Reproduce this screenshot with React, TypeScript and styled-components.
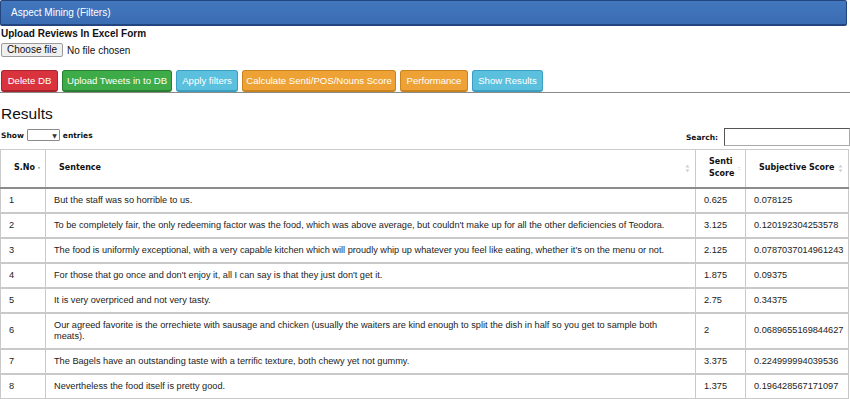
import React from 'react'
import styled, { createGlobalStyle } from 'styled-components'

const GlobalStyle = createGlobalStyle`
    body {
        margin: 0;
        background: #fff;
        font-family: 'Liberation Sans', Arial, sans-serif;
        color: #222;
    }
`

interface Row {
    id: number
    sentence: string
    senti: string
    subjective: string
}

const rows: Row[] = [
    { id: 1, sentence: 'But the staff was so horrible to us.', senti: '0.625', subjective: '0.078125' },
    {
        id: 2,
        sentence:
            "To be completely fair, the only redeeming factor was the food, which was above average, but couldn't make up for all the other deficiencies of Teodora.",
        senti: '3.125',
        subjective: '0.120192304253578',
    },
    {
        id: 3,
        sentence:
            "The food is uniformly exceptional, with a very capable kitchen which will proudly whip up whatever you feel like eating, whether it's on the menu or not.",
        senti: '2.125',
        subjective: '0.0787037014961243',
    },
    {
        id: 4,
        sentence: "For those that go once and don't enjoy it, all I can say is that they just don't get it.",
        senti: '1.875',
        subjective: '0.09375',
    },
    { id: 5, sentence: 'It is very overpriced and not very tasty.', senti: '2.75', subjective: '0.34375' },
    {
        id: 6,
        sentence:
            'Our agreed favorite is the orrechiete with sausage and chicken (usually the waiters are kind enough to split the dish in half so you get to sample both meats).',
        senti: '2',
        subjective: '0.0689655169844627',
    },
    {
        id: 7,
        sentence: 'The Bagels have an outstanding taste with a terrific texture, both chewy yet not gummy.',
        senti: '3.375',
        subjective: '0.224999994039536',
    },
    { id: 8, sentence: 'Nevertheless the food itself is pretty good.', senti: '1.375', subjective: '0.196428567171097' },
]

type Tone = 'red' | 'green' | 'info' | 'orange'

const tones: Record<Tone, { bg: string; border: string }> = {
    red: { bg: '#d9343e', border: '#a8232b' },
    green: { bg: '#3dab47', border: '#2a7e31' },
    info: { bg: '#5bc0de', border: '#3a9fc0' },
    orange: { bg: '#eea236', border: '#c9841e' },
}

const buttons: { label: string; tone: Tone; width: number }[] = [
    { label: 'Delete DB', tone: 'red', width: 57 },
    { label: 'Upload Tweets in to DB', tone: 'green', width: 110 },
    { label: 'Apply filters', tone: 'info', width: 62 },
    { label: 'Calculate Senti/POS/Nouns Score', tone: 'orange', width: 154 },
    { label: 'Performance', tone: 'orange', width: 68 },
    { label: 'Show Results', tone: 'info', width: 71 },
]

const Page = styled.div`
    width: 850px;
    overflow: hidden;
`

const PanelHeading = styled.div`
    height: 23px;
    margin-right: 3px;
    display: flex;
    align-items: center;
    padding-left: 10px;
    background: linear-gradient(#4277be, #3a6cb3);
    border: 1px solid #22457f;
    border-bottom-width: 2px;
    border-radius: 2px;
    color: #fff;
    font-size: 10px;
`

const UploadTitle = styled.div`
    margin: 2px 0 0 1px;
    font-size: 10px;
    line-height: 12px;
    font-weight: bold;
    color: #111;
`

const FileRow = styled.div`
    margin: 3px 0 0 1px;
    display: flex;
    align-items: center;
    gap: 4px;
    font-size: 10px;
    color: #111;
`

const ChooseButton = styled.div`
    height: 12px;
    line-height: 12px;
    padding: 0 5px;
    background: #efefef;
    border: 1px solid #9a9a9a;
    border-radius: 2px;
`

const Toolbar = styled.div`
    margin-top: 13px;
    padding-left: 1px;
    display: flex;
    gap: 4px;
    border-bottom: 1px solid #8a8a8a;
`

const ActionButton = styled.div<{ $tone: Tone; $width: number }>`
    width: ${(p) => p.$width}px;
    height: 20px;
    display: flex;
    align-items: center;
    justify-content: center;
    box-sizing: border-box;
    height: 22px;
    background: ${(p) => tones[p.$tone].bg};
    border: 1px solid ${(p) => tones[p.$tone].border};
    border-bottom-width: 2px;
    border-radius: 3px;
    color: #fff;
    font-size: 9.6px;
    white-space: nowrap;
`

const ResultsHeading = styled.h2`
    margin: 12px 0 0 1px;
    font-size: 15.5px;
    line-height: 18px;
    font-weight: normal;
    color: #111;
`

const Controls = styled.div`
    margin-top: 4px;
    height: 20px;
    display: flex;
    justify-content: space-between;
    align-items: center;
    font-family: 'DejaVu Sans', Verdana, sans-serif;
    font-weight: bold;
    font-size: 7.5px;
    color: #111;
`

const LengthControl = styled.div`
    display: flex;
    align-items: center;
    gap: 3px;
    padding: 0 0 4px 1px;
`

const LengthSelect = styled.div`
    width: 29px;
    height: 10px;
    display: flex;
    align-items: center;
    justify-content: flex-end;
    padding-right: 2px;
    border: 1px solid #8a8a8a;
    border-radius: 1px;
    font-size: 6px;
    color: #333;
`

const SearchControl = styled.div`
    display: flex;
    align-items: center;
    gap: 6px;
`

const SearchBox = styled.div`
    width: 124px;
    height: 16px;
    border: 1px solid #a9a9a9;
    border-top-color: #555;
    border-left-color: #555;
`

const Table = styled.table`
    margin-top: 2px;
    width: 848px;
    border-collapse: collapse;
    table-layout: fixed;
    border: 1px solid #c6c6c6;
`

const HeadCell = styled.th<{ $width: number }>`
    width: ${(p) => p.$width}px;
    height: 38px;
    padding: 0 5px 0 13px;
    box-sizing: border-box;
    border: 1px solid #cbcbcb;
    border-bottom: 2px solid #8c8c8c;
    text-align: left;
    vertical-align: middle;
    font-family: 'DejaVu Sans', Verdana, sans-serif;
    font-size: 8px;
    line-height: 12px;
    color: #111;
`

const HeadInner = styled.div`
    display: flex;
    align-items: center;
    justify-content: space-between;
    gap: 3px;
`

const Cell = styled.td`
    padding: 6px 8px;
    border: 1px solid #c9c9c9;
    border-top-width: 2px;
    vertical-align: middle;
    font-size: 9.2px;
    line-height: 11px;
    color: #222;
`

const SortIcon = ({ active }: { active?: boolean }) =>
    active ? (
        <svg width="5" height="9" viewBox="0 0 5 9">
            <path d="M0 4 L2.5 0.5 L5 4 Z" fill="#333" />
        </svg>
    ) : (
        <svg width="5" height="9" viewBox="0 0 5 9">
            <path d="M0.5 3.6 L2.5 0.8 L4.5 3.6 Z" fill="#cfcfcf" />
            <path d="M0.5 5.4 L2.5 8.2 L4.5 5.4 Z" fill="#cfcfcf" />
        </svg>
    )

const columns = [
    { title: 'S.No', width: 45, active: true },
    { title: 'Sentence', width: 650 },
    { title: 'Senti Score', width: 50 },
    { title: 'Subjective Score', width: 103 },
]

const App = () => {
    return (
        <Page>
            <GlobalStyle />
            <PanelHeading>Aspect Mining (Filters)</PanelHeading>
            <UploadTitle>Upload Reviews In Excel Form</UploadTitle>
            <FileRow>
                <ChooseButton>Choose file</ChooseButton>
                <span>No file chosen</span>
            </FileRow>
            <Toolbar>
                {buttons.map((b) => (
                    <ActionButton key={b.label} $tone={b.tone} $width={b.width}>
                        {b.label}
                    </ActionButton>
                ))}
            </Toolbar>
            <ResultsHeading>Results</ResultsHeading>
            <Controls>
                <LengthControl>
                    Show
                    <LengthSelect>▼</LengthSelect>
                    entries
                </LengthControl>
                <SearchControl>
                    Search:
                    <SearchBox />
                </SearchControl>
            </Controls>
            <Table>
                <thead>
                    <tr>
                        {columns.map((c) => (
                            <HeadCell key={c.title} $width={c.width}>
                                <HeadInner>
                                    <span>{c.title}</span>
                                    <SortIcon active={c.active} />
                                </HeadInner>
                            </HeadCell>
                        ))}
                    </tr>
                </thead>
                <tbody>
                    {rows.map((r) => (
                        <tr key={r.id}>
                            <Cell>{r.id}</Cell>
                            <Cell>{r.sentence}</Cell>
                            <Cell>{r.senti}</Cell>
                            <Cell>{r.subjective}</Cell>
                        </tr>
                    ))}
                </tbody>
            </Table>
        </Page>
    )
}

export default App
